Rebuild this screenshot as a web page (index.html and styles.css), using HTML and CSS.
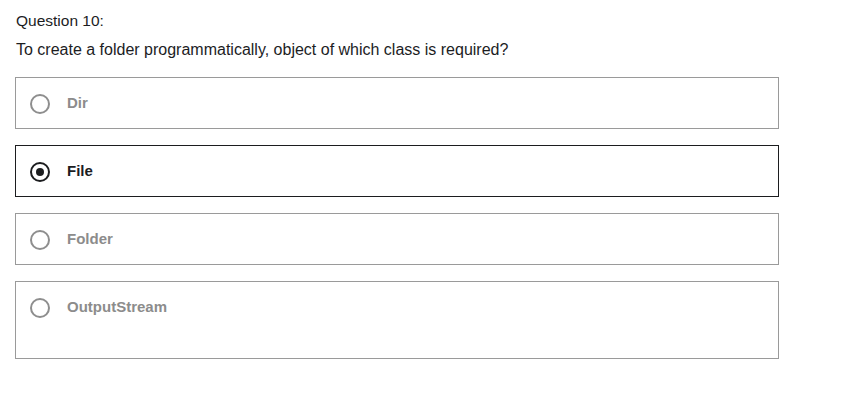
FILE: index.html
```html
<!DOCTYPE html>
<html>
<head>
<meta charset="utf-8">
<link rel="stylesheet" href="styles.css">
</head>
<body>
<div class="quiz">
  <div class="q-title">Question 10:</div>
  <div class="q-text">To create a folder programmatically, object of which class is required?</div>
  <div class="options">
    <label class="option"><span class="radio"></span><span class="label">Dir</span></label>
    <label class="option selected"><span class="radio"></span><span class="label">File</span></label>
    <label class="option"><span class="radio"></span><span class="label">Folder</span></label>
    <label class="option tall"><span class="radio"></span><span class="label">OutputStream</span></label>
  </div>
</div>
</body>
</html>
```
FILE: styles.css
```css
html, body {
  margin: 0;
  padding: 0;
  background: #fff;
}
body {
  font-family: "Liberation Sans", Arial, sans-serif;
  color: #1c1d1f;
}
.quiz {
  width: 764px;
  padding: 11px 0 0 15px;
}
.q-title {
  font-size: 15.5px;
  line-height: 20px;
  padding-left: 1px;
}
.q-text {
  font-size: 16px;
  line-height: 20px;
  margin-top: 9px;
  padding-left: 1px;
}
.options {
  margin-top: 17px;
  display: flex;
  flex-direction: column;
  gap: 16px;
}
.option {
  display: flex;
  align-items: flex-start;
  border: 1px solid #9a9a9a;
  height: 50px;
  box-sizing: content-box;
  padding: 0 0 0 14px;
}
.option.tall {
  height: 76px;
}
.option.selected {
  border-color: #1c1d1f;
}
.radio {
  width: 16px;
  height: 16px;
  border: 2px solid #8e8e8e;
  border-radius: 50%;
  margin-top: 16px;
  flex: none;
  position: relative;
}
.selected .radio {
  border-color: #1c1d1f;
}
.selected .radio::after {
  content: "";
  position: absolute;
  left: 4px;
  top: 4px;
  width: 8px;
  height: 8px;
  border-radius: 50%;
  background: #1c1d1f;
}
.label {
  font-weight: bold;
  font-size: 15px;
  line-height: 20px;
  margin-left: 17px;
  margin-top: 15px;
  color: #8c8c8c;
}
.selected .label {
  color: #1c1d1f;
}
```
